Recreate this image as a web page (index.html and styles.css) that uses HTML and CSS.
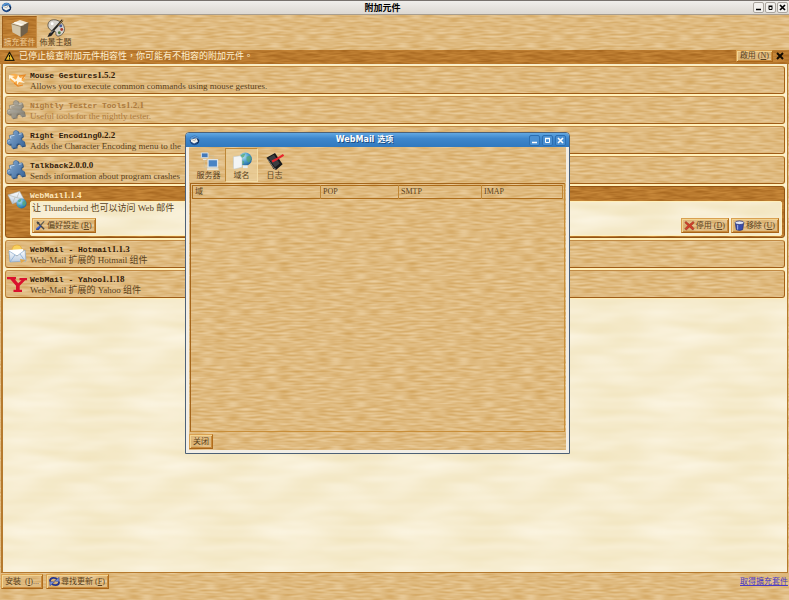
FILE: index.html
```html
<!DOCTYPE html>
<html lang="zh-Hant">
<head>
<meta charset="utf-8">
<title>附加元件</title>
<link rel="stylesheet" href="styles.css">
</head>
<body>
<svg class="defs" aria-hidden="true">
  <defs>
    <linearGradient id="blue" x1="0" y1="0" x2="1" y2="1"><stop offset="0" stop-color="#8db0d4"/><stop offset="1" stop-color="#3c689c"/></linearGradient>
    <linearGradient id="paper" x1="0" y1="0" x2="0" y2="1"><stop offset="0" stop-color="#fff"/><stop offset="1" stop-color="#b9cbe0"/></linearGradient>
    <radialGradient id="ball" cx=".35" cy=".3" r=".8"><stop offset="0" stop-color="#b9e6f5"/><stop offset=".5" stop-color="#4d9fce"/><stop offset="1" stop-color="#1c5c94"/></radialGradient>
    <symbol id="bird" viewBox="0 0 12 12">
      <circle cx="6" cy="6" r="5.2" fill="#1f4a86"/>
      <path d="M1 5Q2 1 6 1q4 0 5 4Q8 2 5 3L2 6Z" fill="#5a9ad8"/>
      <path d="M2.5 4.5 8 3.5l2 3.5-4.5 2.4L2 7Z" fill="#f2f2ee"/>
      <path d="m2.5 4.5 3.5 2 2-3" fill="none" stroke="#9a9a90" stroke-width=".7"/>
      <path d="M9 4q2 3-1 6 3-1 3-4Z" fill="#0c2448"/>
    </symbol>
    <symbol id="puzzle" viewBox="0 0 20 20">
      <g transform="rotate(-12 10 10)">
        <path d="M3.500 4H8A2.600 2.600 0 1 1 12.800 4H16.500V8A2.100 2.100 0 1 0 16.500 12.500V17.500H12.500A2.300 2.300 0 1 0 8.300 17.500H3.500V13A2.600 2.600 0 1 1 3.500 8.500Z" fill="#2c4c74" transform="translate(.8 .8)"/>
        <path d="M3.500 4H8A2.600 2.600 0 1 1 12.800 4H16.500V8A2.100 2.100 0 1 0 16.500 12.500V17H12.500A2.300 2.300 0 1 0 8.300 17H3.500V12.500A2.600 2.600 0 1 1 3.500 8Z" fill="url(#blue)" stroke="#446a98" stroke-width=".6"/>
        <path d="M4.300 7.500V4.900H8.500M13 4.900h2.800M1.200 9.600q.4-1 1.500-.9" fill="none" stroke="#cfe0f0" stroke-width=".8"/>
      </g>
    </symbol>
    <symbol id="globe" viewBox="0 0 12 12">
      <circle cx="6" cy="6" r="5.500" fill="url(#ball)"/>
      <path d="M2 3q2-2 4-1.500L5 4 3 5ZM7 4l3-1 1 3-2 3-2-2ZM3 7l2 1-.5 2.500L2.500 9Z" fill="#58a878" opacity=".8"/>
    </symbol>
    <symbol id="envelope" viewBox="0 0 20 18">
      <path d="M1 5 14 1l5 9L6 15Z" fill="url(#paper)" stroke="#a7a79d" stroke-width=".6"/>
      <path d="m1 5 10 3 3-7M6 15l3-7.500M19 10l-8-2" fill="none" stroke="#b5b5ab" stroke-width=".7"/>
    </symbol>
    <symbol id="tools" viewBox="0 0 12 12">
      <path d="m2 2 8 8M2.500 4.500 4.500 2.500" stroke="#444" stroke-width="1.500" fill="none"/>
      <path d="m10 1.500-5 5.500" stroke="#5c5c54" stroke-width="1.300"/>
      <path d="M5.500 5.800 6.800 7 4 11H1.200l.2-2Z" fill="#2848a8"/>
      <path d="m2 9.500 3-3" stroke="#90a8f0" stroke-width=".7"/>
    </symbol>
  </defs>
</svg>

<header class="titlebar">
  <svg class="app-icon"><use href="#bird"/></svg>
  <h1>附加元件</h1>
  <div class="win-buttons">
    <button type="button" aria-label="最小化"><svg viewBox="0 0 9 9"><path d="M2 6.500h5" stroke="#000" stroke-width="1.500"/></svg></button>
    <button type="button" aria-label="最大化"><svg viewBox="0 0 9 9"><path d="M3 3.500h3v3H3Z" fill="none" stroke="#000"/><path d="M2.500 3h4" stroke="#000" stroke-width="1"/></svg></button>
    <button type="button" aria-label="關閉"><svg viewBox="0 0 9 9"><path d="m2 2 5 5M7 2 2 7" stroke="#000" stroke-width="1.700"/></svg></button>
  </div>
</header>

<nav class="toolbar">
  <button type="button" class="tab active">
    <svg viewBox="0 0 20 20"><path d="m1 5 9-4 9 3-8 4Z" fill="#f0e6d2"/><path d="m1 5 10 3v11L2 14Z" fill="#d3c5a8"/><path d="m11 8 8-4-1 10-7 5Z" fill="#71614a"/><path d="m5 3 9.500 3.300-2 1L3.500 4Z" fill="#fffaf0"/><path d="m1 5 10 3 8-4M11 8v11" fill="none" stroke="#6a5a42" stroke-width=".6"/></svg>
    擴充套件
  </button>
  <button type="button" class="tab">
    <svg viewBox="0 0 20 20"><path d="M2 4q2-4 8-3 8 2 9 9 0 6-6 8-4 0-3-4-1-2-5-2Q0 9 2 4Z" fill="#d8d4cc" stroke="#4b4740" stroke-width=".8"/><circle cx="6" cy="5" r="1.500" fill="#fff"/><circle cx="15" cy="7" r="1.600" fill="#4a5c98"/><circle cx="16" cy="11" r="1.500" fill="#a63c2e"/><circle cx="13.500" cy="14.500" r="1.500" fill="#4c7640"/><path d="M17 1 6 13" stroke="#292722" stroke-width="2.200"/><path d="m17.500.8-5 6" stroke="#b88a4a"/><path d="m7 11 2 2-4 5-4 1 2-4Z" fill="#222"/><path d="m4 15 3-3" stroke="#ddd" stroke-width=".8"/></svg>
    佈景主題
  </button>
</nav>

<section class="notice">
  <svg class="warn" viewBox="0 0 12 12"><path d="M6 1.300 11 10.300H1Z" fill="#f7c72f" stroke="#211a08" stroke-width="1.300" stroke-linejoin="round"/><path d="M6 4.200v3M6 8v1.300" stroke="#111" stroke-width="1.300"/></svg>
  <p>已停止檢查附加元件相容性，你可能有不相容的附加元件。</p>
  <button type="button" class="btn">啟用&nbsp;(<u>N</u>)</button>
  <button type="button" class="dismiss" aria-label="關閉通知"><svg viewBox="0 0 10 10"><path d="m2 2 6 6M8 2 2 8" stroke="#140b00" stroke-width="2"/></svg></button>
</section>

<main class="list">
  <article class="item">
    <svg class="icon" viewBox="0 0 20 20"><path d="M2 6q5-4 9-1 5 0 7 4l-4 5q-5 2-7-1-4-1-5-7Z" fill="#f8ad4c"/><path d="m2 5 6 1-3 1 4 3-1 2-5-4-1 2ZM11 5l2 3 5-1-4 3 4 3-6-1-2 3 0-4-3 1 3-4Z" fill="#fff4dc"/><path d="m12 6 6-1-3 4M7 13l4 3 5-1" fill="none" stroke="#e98824" stroke-width="1.200"/></svg>
    <div><h2>Mouse Gestures<b>1.5.2</b></h2><p>Allows you to execute common commands using mouse gestures.</p></div>
  </article>
  <article class="item disabled">
    <svg class="icon"><use href="#puzzle"/></svg>
    <div><h2>Nightly Tester Tools<b>1.2.1</b></h2><p>Useful tools for the nightly tester.</p></div>
  </article>
  <article class="item">
    <svg class="icon"><use href="#puzzle"/></svg>
    <div><h2>Right Encoding<b>0.2.2</b></h2><p>Adds the Character Encoding menu to the</p></div>
  </article>
  <article class="item">
    <svg class="icon"><use href="#puzzle"/></svg>
    <div><h2>Talkback<b>2.0.0.0</b></h2><p>Sends information about program crashes</p></div>
  </article>
  <article class="item selected">
    <svg class="icon" viewBox="0 0 20 20"><use href="#envelope" width="18" height="17"/><use href="#globe" x="9" y="8" width="11" height="11"/></svg>
    <div class="grow">
      <h2>WebMail<b>1.1.4</b></h2>
      <div class="panel">
        <p>让 Thunderbird 也可以访问 Web 邮件</p>
        <div class="actions">
          <button type="button" class="btn"><svg><use href="#tools"/></svg>偏好設定&nbsp;(<u>R</u>)</button>
          <span class="spacer"></span>
          <button type="button" class="btn"><svg viewBox="0 0 12 12"><path d="M2 1.500 6 5l4-3.500 1 1.500-3 3 3 3.500L9.500 11 6 7.500 2.500 11 1 9.500 4.300 6 1 3Z" fill="#d4402c" stroke="#8c2418" stroke-width=".6"/></svg>停用&nbsp;(<u>D</u>)</button>
          <button type="button" class="btn"><svg viewBox="0 0 12 12"><path d="M1.500 3.500h9l-1 7q-3.500 1.800-7 0Z" fill="#3a4eac" stroke="#232d70" stroke-width=".7"/><path d="M4 5.500v5" stroke="#aebcf0"/><ellipse cx="6" cy="3" rx="4.800" ry="2" fill="#e1e5f4" stroke="#232d70" stroke-width=".8"/></svg>移除&nbsp;(<u>U</u>)</button>
        </div>
      </div>
    </div>
  </article>
  <article class="item">
    <svg class="icon" viewBox="0 0 20 20"><path d="M5 7q0-6 5-6t5 6Z" fill="#f8d15e" stroke="#e4a734" stroke-width=".7"/><path d="m2 6 14-1 1 6H3Z" fill="#fff"/><path d="m2 7 8 5 8-6 1 11-16 1Z" fill="url(#paper)" stroke="#88a8c8" stroke-width=".7"/><path d="m3 18 5-7M18 17l-5-7" stroke="#89abd0" stroke-width=".8"/><path d="m13 15 6 1-5 3Z" fill="#e0a84c"/></svg>
    <div><h2>WebMail - Hotmail<b>1.1.3</b></h2><p>Web-Mail 扩展的 Hotmail 组件</p></div>
  </article>
  <article class="item">
    <svg class="icon" viewBox="0 0 20 20"><path d="M0 3h9v2.200H7.800L11.200 9.300 14.500 6.200H12.500V4H20V6.200h-1.800l-5.500 5.500v4h2.300V18H6.500v-2.300H9v-4L3.300 5.200H0Z" fill="#d9122e"/></svg>
    <div><h2>WebMail - Yahoo<b>1.1.18</b></h2><p>Web-Mail 扩展的 Yahoo 组件</p></div>
  </article>
</main>

<footer class="footer">
  <button type="button" class="btn">安裝&nbsp;&nbsp;(<u>I</u>)...</button>
  <button type="button" class="btn"><svg viewBox="0 0 12 12"><path d="M1 6q0-4 4-4 3 0 4 2" fill="none" stroke="#24358c" stroke-width="2"/><path d="M11 6q0 4-4 4-3 0-4-2" fill="none" stroke="#24358c" stroke-width="2"/><path d="M6 5.500 11 6V1.500ZM6 6.500 1 6v4.500Z" fill="#7c94dc" stroke="#24358c" stroke-width=".6"/></svg>尋找更新&nbsp;(<u>F</u>)</button>
  <a href="#">取得擴充套件</a>
</footer>

<section class="dialog" role="dialog" aria-labelledby="dlg-title" lang="zh-Hans">
  <header class="dialog-title">
    <svg class="app-icon"><use href="#bird"/></svg>
    <h2 id="dlg-title">WebMail 选项</h2>
    <div class="win-buttons">
      <button type="button" aria-label="最小化"><svg viewBox="0 0 9 9"><path d="M2 6.500h5" stroke="#fff" stroke-width="1.500"/></svg></button>
      <button type="button" aria-label="最大化"><svg viewBox="0 0 9 9"><path d="M2.500 2.500h4v4h-4Z" fill="none" stroke="#fff"/><path d="M2 2.500h5" stroke="#fff" stroke-width="1.500"/></svg></button>
      <button type="button" aria-label="关闭窗口"><svg viewBox="0 0 9 9"><path d="m2 2 5 5M7 2 2 7" stroke="#fff" stroke-width="1.600"/></svg></button>
    </div>
  </header>
  <div class="dialog-body">
    <nav class="dialog-tabs">
      <button type="button" class="tab">
        <svg viewBox="0 0 20 20"><path d="M5 7v9h5M9 4h6v4" fill="none" stroke="#c9bf9d" stroke-width=".7"/><path d="M2 1h7v5H2Z" fill="#4378b8" stroke="#d6e0e8"/><path d="M3.500 8h4" stroke="#eee"/><path d="M9 8h10v8H9Z" fill="#4a84c4" stroke="#dde4e8" stroke-width="1.300"/><path d="M8 18h12" stroke="#e9e7dc" stroke-width="1.800"/></svg>
        服务器
      </button>
      <button type="button" class="tab active">
        <svg viewBox="0 0 20 20"><use href="#globe" x="6" y="0" width="15" height="15"/><path d="m1 5 7-1 2 2v10l-8 2-1-1Z" fill="#f3f5f5" stroke="#bfcad0" stroke-width=".6"/><path d="M11 14h5v3h-5Z" fill="#e8eef0"/></svg>
        域名
      </button>
      <button type="button" class="tab">
        <svg viewBox="0 0 20 20"><path d="m1 6 9-5 8 12-7 6-3-2Z" fill="#18191a"/><path d="m3 6 6-3 6 9-5 4Z" fill="#3a3d40"/><path d="m2 7 7 10 2 1" fill="none" stroke="#aaa79e" stroke-width=".7"/><path d="m7 10 4-2 8-5" fill="none" stroke="#e8242c" stroke-width="2.400"/></svg>
        日志
      </button>
    </nav>
    <div class="tree">
      <table>
        <thead><tr><th class="c-domain">域</th><th class="c-pop">POP</th><th class="c-smtp">SMTP</th><th>IMAP</th></tr></thead>
      </table>
    </div>
    <div class="dialog-footer"><button type="button" class="btn">关闭</button></div>
  </div>
</section>
</body>
</html>
```

FILE: styles.css
```css
:root {
  --wood: url("data:image/svg+xml,%3Csvg xmlns='http://www.w3.org/2000/svg' width='128' height='128'%3E%3Cfilter id='f' x='0' y='0' width='100%25' height='100%25' color-interpolation-filters='sRGB'%3E%3CfeTurbulence type='fractalNoise' baseFrequency='.08 .5' numOctaves='1' seed='4' stitchTiles='stitch'/%3E%3CfeColorMatrix values='.14 0 0 0 .805 .24 0 0 0 .61 .38 0 0 0 .31 0 0 0 0 1'/%3E%3C/filter%3E%3Crect width='128' height='128' filter='url(%23f)'/%3E%3C/svg%3E");
  --dark-wood: url("data:image/svg+xml,%3Csvg xmlns='http://www.w3.org/2000/svg' width='128' height='128'%3E%3Cfilter id='f' x='0' y='0' width='100%25' height='100%25' color-interpolation-filters='sRGB'%3E%3CfeTurbulence type='fractalNoise' baseFrequency='.06 .4' numOctaves='2' seed='7' stitchTiles='stitch'/%3E%3CfeColorMatrix values='.25 0 0 0 .6 .25 0 0 0 .35 .2 0 0 0 .08 0 0 0 0 1'/%3E%3C/filter%3E%3Crect width='128' height='128' filter='url(%23f)'/%3E%3C/svg%3E");
  --pale-wood: url("data:image/svg+xml,%3Csvg xmlns='http://www.w3.org/2000/svg' width='128' height='128'%3E%3Cfilter id='f' x='0' y='0' width='100%25' height='100%25' color-interpolation-filters='sRGB'%3E%3CfeTurbulence type='fractalNoise' baseFrequency='.016 .08' numOctaves='2' seed='3' stitchTiles='stitch'/%3E%3CfeColorMatrix values='.05 0 0 0 .94 .08 0 0 0 .885 .18 0 0 0 .72 0 0 0 0 1'/%3E%3C/filter%3E%3Crect width='128' height='128' filter='url(%23f)'/%3E%3C/svg%3E");
  --serif: "Liberation Serif", "Noto Sans CJK TC", serif;
  --ink: #5a4220;
}

* { box-sizing: border-box; }

body {
  margin: 0;
  min-height: 100vh;
  display: flex;
  flex-direction: column;
  background: #dfb978 var(--wood);
  color: var(--ink);
  font: 8px/10px var(--serif);
}

.dialog { font-family: "Liberation Serif", "Noto Sans CJK SC", serif; }

h1, h2, p { margin: 0; font-size: inherit; }
button { margin: 0; padding: 0; border: 0; background: none; color: inherit; font: inherit; }
.defs { position: absolute; width: 0; height: 0; }

/* Window frames */
.titlebar, .dialog-title {
  display: flex;
  align-items: center;
  height: 15px;
  padding: 0 1px;
}
.titlebar {
  border-top: 1px solid #77716d;
  border-bottom: 1px solid #a89e90;
  background: linear-gradient(#f0eeeb, #dcd8d2);
}
.titlebar h1, .dialog-title h2 {
  flex: 1;
  text-align: center;
  font: bold 9px/12px "DejaVu Sans", "Noto Sans CJK TC", sans-serif;
}
.titlebar h1 { color: #000; }
.app-icon { width: 11px; height: 11px; }
.win-buttons { display: flex; gap: 1px; }
.win-buttons button {
  width: 11px;
  height: 11px;
  border: 1px solid #aaa59e;
  border-radius: 2px;
  background: #f3f1ee;
}
.win-buttons svg { display: block; width: 9px; height: 9px; }

/* Category tabs */
.toolbar { display: flex; gap: 1px; padding: 1px 2px 2px; }
.tab {
  display: flex;
  flex-direction: column;
  align-items: center;
  width: 35px;
  height: 32px;
  padding-top: 2px;
  border: 1px solid transparent;
  white-space: nowrap;
}
.tab svg { width: 20px; height: 19px; flex: none; }
.toolbar .active {
  border-color: #9c5e1c #c98f48 #c98f48 #9c5e1c;
  background: var(--dark-wood);
  color: #edc892;
}

/* Notification bar */
.notice {
  display: flex;
  align-items: center;
  height: 14px;
  padding: 0 4px 2px;
  background: var(--dark-wood);
}
.notice p {
  flex: 1;
  margin-left: 4px;
  color: #fff0cf;
  font-family: "Liberation Serif", "Noto Sans CJK SC", serif;
  font-size: 9px;
}
.warn { width: 11px; height: 11px; }
.dismiss svg { display: block; width: 10px; height: 10px; }
.notice .btn { height: 12px; margin-right: 2px; }

.btn {
  display: inline-flex;
  align-items: center;
  height: 15px;
  padding: 0 3px;
  border: 1px solid;
  border-color: #d9a050 #b06c1c #a86418 #d9a050;
  box-shadow: inset 1px 1px #f3d592, inset -1px -1px #c98b3c;
  background: #dfb978 var(--wood);
  white-space: nowrap;
}
.btn svg { width: 11px; height: 11px; margin: 0 1px 0 -1px; }

/* Add-on list */
.list {
  flex: 1;
  display: flex;
  flex-direction: column;
  gap: 2px;
  margin: 0 1px;
  padding: 2px;
  border: 1px solid #b67a2e;
  border-width: 0 1px 1px 2px;
  background: #f7edcc var(--pale-wood);
}
.item {
  display: flex;
  gap: 3px;
  min-height: 28px;
  padding: 3px 2px 0 1px;
  border: 1px solid;
  border-color: #c18a45 #a5611a #a05c16 #bd823a;
  border-radius: 3px;
  box-shadow: 0 0 0 1px #ffefb9;
  background: #dfb978 var(--wood);
}
.icon { width: 20px; height: 20px; flex: none; }
.item h2 { color: #33200a; font: bold 8px/10px "Liberation Mono", monospace; }
.item h2 b { font: bold 9px/10px var(--serif); }
.item p { font: 9px/10px var(--serif); }
.disabled h2, .disabled p { color: #ac7a3e; }
.disabled .icon { opacity: .6; filter: saturate(.4); }
.grow { flex: 1; }
.selected { padding-bottom: 1px; background: var(--dark-wood); border-color: #935313; }
.selected h2 { color: #ffe8bd; }
.panel {
  padding: 1px 2px 2px 1px;
  border: 1px solid #ffefb9;
  border-radius: 2px;
  background: #f7edcc var(--pale-wood);
}
.actions { display: flex; gap: 2px; margin-top: 5px; }
.spacer { flex: 1; }

.footer { display: flex; align-items: flex-start; gap: 3px; height: 27px; padding: 1px; }
.footer a { margin: 3px 0 0 auto; color: #4b3bc4; }

/* Options window */
.dialog {
  position: absolute;
  left: 185px;
  top: 132px;
  width: 385px;
  height: 322px;
  display: flex;
  flex-direction: column;
  border: 1px solid #4d6177;
  border-radius: 4px 4px 0 0;
  background: #f2eee6;
}
.dialog-title {
  height: 14px;
  padding: 0 3px;
  border-radius: 3px 3px 0 0;
  background: linear-gradient(#62a8e2, #3d86cc 40%, #3179be);
  color: #fff;
}
.dialog-title h2 { font-size: 8px; font-family: "DejaVu Sans", "Noto Sans CJK SC", sans-serif; text-shadow: 1px 1px #1d4e84; }
.dialog .win-buttons { gap: 2px; }
.dialog .win-buttons button { border-color: #2c6eb0; background: #4a90d2; }
.dialog-body {
  flex: 1;
  display: flex;
  flex-direction: column;
  margin: 0 3px 3px;
  background: #dfb978 var(--wood);
}
.dialog-tabs { display: flex; padding: 1px 3px; }
.dialog-tabs .tab { width: 33px; height: 34px; padding-top: 3px; }
.dialog-tabs .active {
  border-color: #bd8738 #f4dca5 #f4dca5 #bd8738;
  background: #ecd3a0a0;
}
.tree {
  flex: 1;
  margin: 0 1px;
  padding: 1px;
  border: 1px solid;
  border-color: #a5661c #c98f3a #c98f3a #a5661c;
}
table { width: 100%; border-collapse: collapse; table-layout: fixed; border: 1px solid #ad6c1a; }
th {
  height: 13px;
  padding: 0 2px;
  border-right: 1px solid #bf8636;
  text-align: left;
  font-weight: normal;
}
.c-domain { width: 128px; }
.c-pop { width: 78px; }
.c-smtp { width: 83px; }
.dialog-footer { padding: 2px 0 1px; }
.dialog-footer .btn { display: flex; padding: 0 3px; }
```
